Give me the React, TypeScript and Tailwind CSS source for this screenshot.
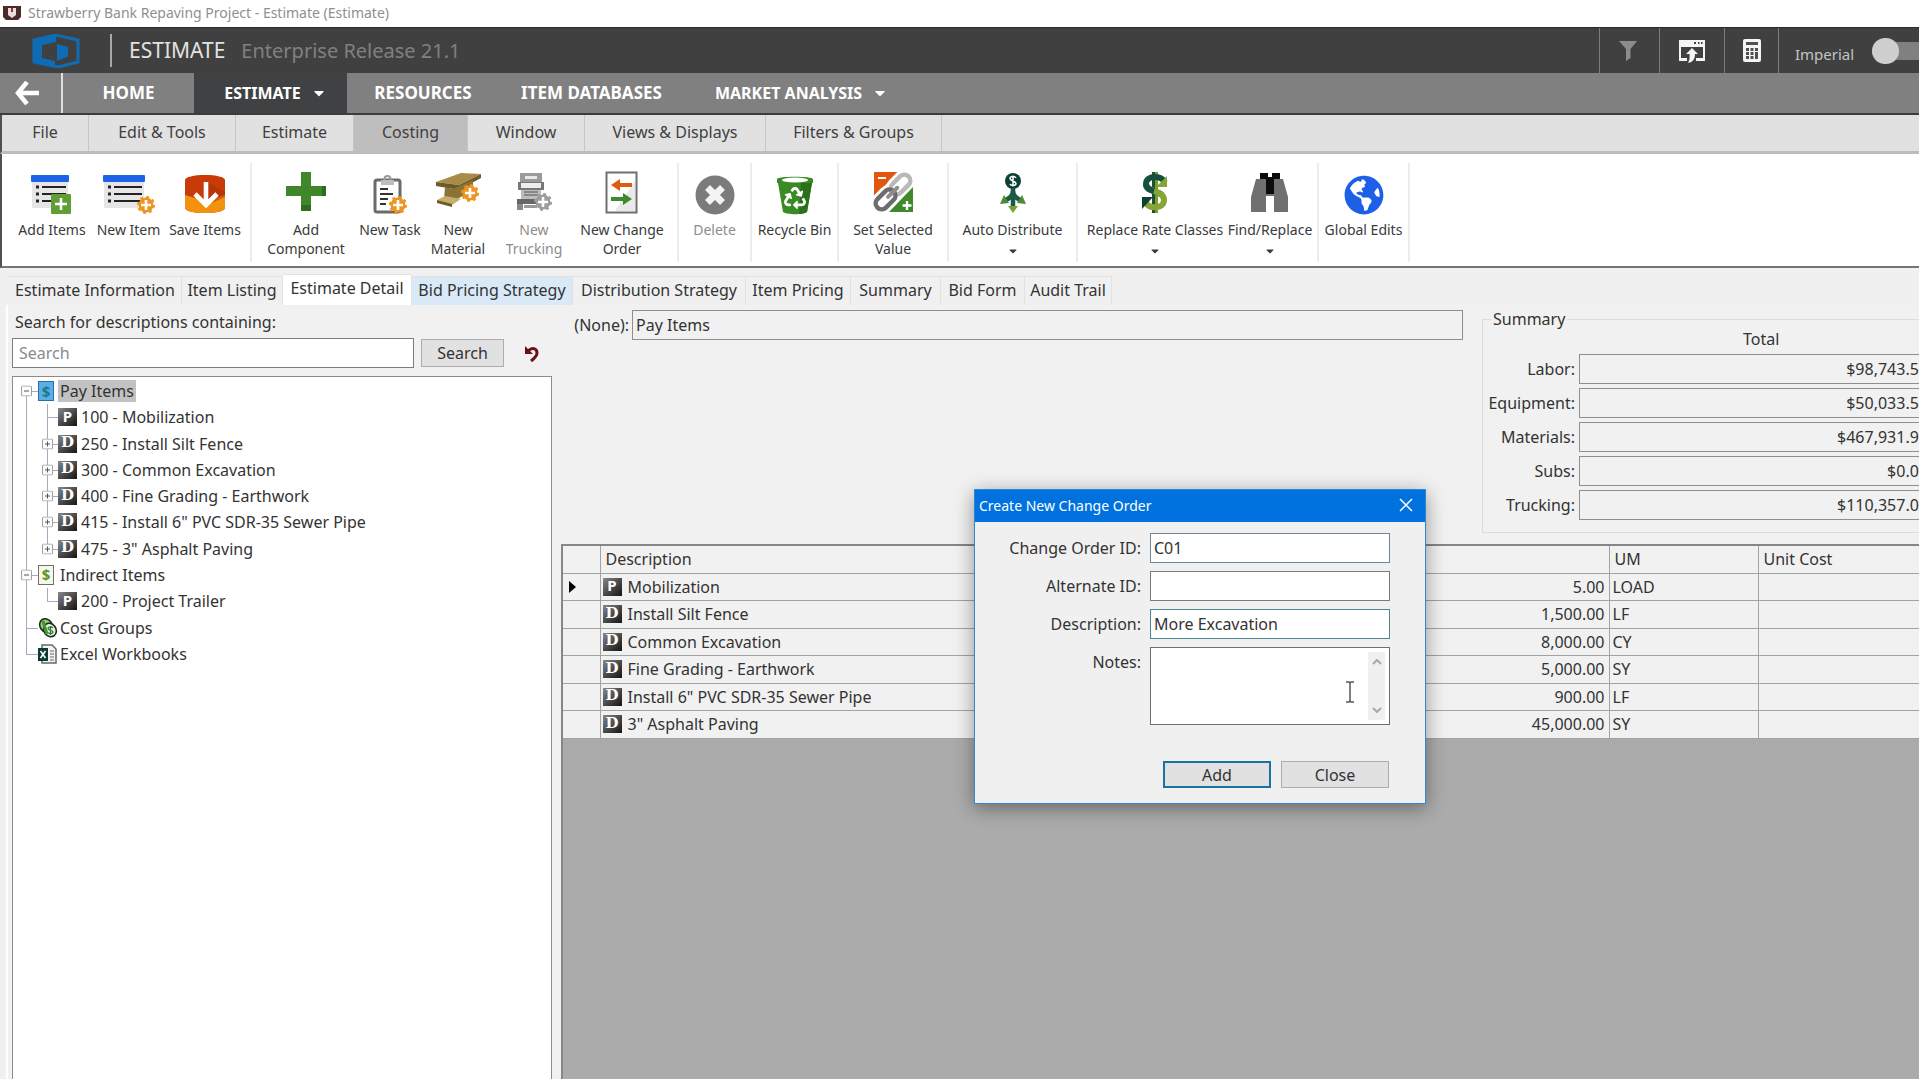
import * as React from "react";
import clsx from "clsx";
import { FaCaretDown, FaGlobeAmericas, FaRecycle } from "react-icons/fa";

/* ---------- icons ---------- */

const SunBadge = ({ x, y, fill = "#ee9420" }: { x: number; y: number; fill?: string }) => (
  <g transform={`translate(${x} ${y})`}>
    <circle r="7.500" fill={fill} />
    <circle r="8" fill="none" stroke={fill} strokeWidth="2" strokeDasharray="3 3.28" />
    <path d="M0-5V5M-5 0H5" stroke="#fff" strokeWidth="2.6" />
  </g>
);

const ListRows = () => (
  <>
    <rect x="1" y="5" width="36" height="32" fill="#e6e6e6" />
    <rect x="0" y="4" width="38" height="7" rx="1" fill="#1f62ea" />
    <path d="M5 16h3M5 23h3M5 30h3" stroke="#222" strokeWidth="3" />
    <path d="M11 16h24M11 23h24M11 30h24" stroke="#222" strokeWidth="2" />
  </>
);

const AddItemsIcon = () => (
  <svg viewBox="0 0 42 44" className="h-11 w-[42px]">
    <ListRows />
    <rect x="20" y="23" width="20" height="20" rx="1" fill="#5f9f35" />
    <path d="M30 27v12M24 33h12" stroke="#fff" strokeWidth="2.6" />
  </svg>
);

const NewItemIcon = () => (
  <svg viewBox="0 0 52 44" className="h-11 w-[52px]">
    <rect x="1" y="5" width="40" height="32" fill="#e6e6e6" />
    <rect x="0" y="4" width="42" height="7" rx="1" fill="#1f62ea" />
    <path d="M5 16h3M5 23h3M5 30h3" stroke="#222" strokeWidth="3" />
    <path d="M11 16h28M11 23h28M11 30h26" stroke="#222" strokeWidth="2" />
    <SunBadge x={43} y={34} />
  </svg>
);

const SaveIcon = () => (
  <svg viewBox="0 0 40 44" className="h-11 w-10">
    <path d="M0 9c0-3 9-5 20-5s20 2 20 5v28c0 3-9 5-20 5S0 40 0 37z" fill="#c83a07" />
    <path d="M0 24l20 6 20-6v13c0 3-9 5-20 5S0 40 0 37z" fill="#f2920f" />
    <path d="M22 11l18 10v5l-18 8z" fill="#a82f05" opacity=".5" />
    <path d="M21 11v22M10 23l11 11 11-11" fill="none" stroke="#fff" strokeWidth="4.6" />
  </svg>
);

const PlusIcon = () => (
  <svg viewBox="0 0 40 44" className="h-11 w-10">
    <path d="M15 1h10v14h15v10H25v15H15V25H0V15h15z" fill="#40862b" />
    <path d="M15 34h10v6H15zM36 15h4v10h-4z" fill="#2f6c20" />
  </svg>
);

const TaskIcon = () => (
  <svg viewBox="0 0 36 44" className="h-11 w-9">
    <rect x="3" y="9" width="25" height="32" rx="2" fill="#fff" stroke="#6b6b6b" strokeWidth="3" />
    <circle cx="15.500" cy="8" r="3" fill="none" stroke="#9a9a9a" strokeWidth="2" />
    <rect x="9" y="9" width="13" height="5" fill="#bdbdbd" />
    <path d="M8 18h8M8 23h13M8 28h8M8 33h6" stroke="#333" strokeWidth="2" />
    <SunBadge x={26} y={34} />
  </svg>
);

const MaterialIcon = () => (
  <svg viewBox="0 0 50 44" className="h-11 w-[50px]">
    <path d="M3 11L28 2l20 1-22 11z" fill="#a78c48" />
    <path d="M3 11v4l23 4v-5zM26 14l22-11v4L26 19z" fill="#6e5a26" />
    <path d="M12 16l8 2v11l-9-1zM20 18l20-9v9L20 31z" fill="#8a7335" />
    <path d="M4 29l8-4 16 3-9 6z" fill="#c4b06a" />
    <path d="M4 29l15 4v3L4 32z" fill="#6e5a26" />
    <SunBadge x={37} y={22} />
  </svg>
);

const TruckIcon = () => (
  <svg viewBox="0 0 36 44" className="h-11 w-9">
    <path d="M4 2h22v9H4z" fill="#9a9a9a" />
    <path d="M9 5h12v3H9z" fill="#e8e8e8" />
    <path d="M2 11h26v8H2z" fill="#777" />
    <path d="M5 12h20v5H5z" fill="#eee" />
    <path d="M5 19h20v9H5z" fill="#bdbdbd" />
    <path d="M8 21h14M8 24h14" stroke="#777" strokeWidth="1.500" />
    <path d="M1 28h27v5H1z" fill="#666" />
    <path d="M1 33h6v6H1z" fill="#888" />
    <path d="M8 34h12v3H8z" fill="#999" />
    <SunBadge x={27} y={31} fill="#9c9c9c" />
  </svg>
);

const ChangeOrderIcon = () => (
  <svg viewBox="0 0 34 44" className="h-11 w-[34px]">
    <rect x="1.500" y="1.500" width="30" height="40" fill="#fff" stroke="#6f6f6f" strokeWidth="2" />
    <path d="M30 10v30H10z" fill="#e9e9e9" />
    <path d="M6 14l9-6v4h12v4H15v4z" fill="#e05a10" />
    <path d="M27 28l-9-6v4H6v4h12v4z" fill="#3c8a2a" />
  </svg>
);

const DeleteIcon = () => (
  <svg viewBox="0 0 40 44" className="h-11 w-10">
    <circle cx="20" cy="24" r="19.500" fill="#7b7b7b" />
    <path d="M12.500 16.500l15 15M27.500 16.500l-15 15" stroke="#f3f3f3" strokeWidth="7" />
  </svg>
);

const BinIcon = () => (
  <span className="relative flex h-11 w-9 justify-center">
    <svg viewBox="0 0 36 44" className="absolute inset-0 h-11 w-9">
      <path d="M0 8c0-3 36-3 36 0v4h-1l-5 29c-4 3-20 3-24 0L1 12H0z" fill="#3a8a26" />
      <path d="M24 12h11l-5 29c-2 1-5 2-8 2z" fill="#2a6f1a" />
      <ellipse cx="18" cy="9" rx="13" ry="2.500" fill="#fff" />
    </svg>
    <FaRecycle className="relative mt-4 h-[22px] w-[22px] text-white" />
  </span>
);

const LinkIcon = () => (
  <svg viewBox="0 0 40 44" className="h-11 w-10">
    <path d="M1 1h25L1 25z" fill="#e2570d" />
    <path d="M40 16v25H16z" fill="#3e8a2b" />
    <path d="M5 7h8" stroke="#fff" strokeWidth="2" />
    <path d="M34 30v9M29.500 34.500h9" stroke="#fff" strokeWidth="2.400" />
    <g fill="none" strokeLinecap="round" transform="rotate(-45 20 21)">
      <rect x="-3" y="14" width="24" height="13" rx="6.500" stroke="#fff" strokeWidth="8" />
      <rect x="19" y="14" width="24" height="13" rx="6.500" stroke="#fff" strokeWidth="8" />
      <rect x="19" y="15" width="23" height="12" rx="6" stroke="#b9b9b9" strokeWidth="4.500" />
      <rect x="-2" y="15" width="23" height="12" rx="6" stroke="#6d6d6d" strokeWidth="4.500" />
      <path d="M13 21h13" stroke="#8d8d8d" strokeWidth="4" />
    </g>
  </svg>
);

const DistributeIcon = () => (
  <svg viewBox="0 0 28 44" className="h-11 w-7">
    <circle cx="14" cy="10" r="8" fill="#0d4034" />
    <path d="M17 7c-1-2-6-2-6 .5S17 10 17 12.500s-5 2.500-6 .5M14 4.500v11" fill="none" stroke="#fff" strokeWidth="1.500" />
    <path d="M14 17v20M14 19c0 6-3 8-9 11M14 19c0 6 3 8 9 11" fill="none" stroke="#1c5a41" strokeWidth="4.500" />
    <path d="M5 24l5 8-9 1zM23 24l-5 8 9 1z" fill="#4f8a36" />
    <path d="M9 35h10l-5 7z" fill="#76a13b" />
  </svg>
);

const DollarCycleIcon = () => (
  <svg viewBox="0 0 28 44" className="h-11 w-7">
    <path d="M11 1h5v41h-5z" fill="#1c5038" />
    <path d="M14 1h3v41h-3z" fill="#7d9c2c" />
    <path d="M24 11C20 4 5 4 5 13c0 8 11 6 16 11" fill="none" stroke="#155040" strokeWidth="6" />
    <path d="M5 13c0 8 18 6 18 16 0 9-14 9-18 3" fill="none" stroke="#86a533" strokeWidth="6" />
    <path d="M5 13c0 4 4 6 8 7" fill="none" stroke="#155040" strokeWidth="6" />
    <path d="M26 5v11H15z" fill="#86a533" />
    <path d="M1 38V26h11z" fill="#0f3f34" />
  </svg>
);

const BinocularsIcon = () => (
  <svg viewBox="0 0 38 44" className="h-11 w-[38px]">
    <path d="M5 8h27l5 18v15H23V25h-8v16H0V26z" fill="#707070" />
    <path d="M9 2h8v6H9zM21 2h8v6h-8zM15 6h8v17h-8z" fill="#0c0c0c" />
    <path d="M17 2h4v4h-4z" fill="#fff" />
  </svg>
);

const GlobeIcon = () => (
  <span className="flex h-11 w-10 items-end justify-center">
    <FaGlobeAmericas className="h-10 w-10 text-[#1d5fe6]" />
  </span>
);

const Logo = () => (
  <svg viewBox="0 0 48 34" className="h-[34px] w-12">
    <path d="M24 1l22 5v22l-20 5L2 28V6z" fill="none" stroke="#0e6cb4" strokeWidth="3" />
    <path d="M2 6L24 1v7L10 11v13l13 3v6L2 28z" fill="#0e6cb4" />
    <path d="M13 12l10-3v17l-10-2z" fill="#404040" />
    <path d="M25 9l12 4v9l-12 5z" fill="#0e6cb4" />
    <path d="M25 9l12 3v12l-11 4" fill="none" stroke="#404040" strokeWidth="2" />
  </svg>
);

/* ---------- ribbon ---------- */

type Tool = { label: string; icon: React.ReactNode; w: string; disabled?: boolean; menu?: boolean };

const GROUPS: { cls: string; tools: Tool[] }[] = [
  {
    cls: "w-[250px] pl-3",
    tools: [
      { label: "Add Items", icon: <AddItemsIcon />, w: "w-[76px]" },
      { label: "New Item", icon: <NewItemIcon />, w: "w-[77px]" },
      { label: "Save Items", icon: <SaveIcon />, w: "w-[76px]" },
    ],
  },
  {
    cls: "w-[427px] pl-[11px]",
    tools: [
      { label: "Add Component", icon: <PlusIcon />, w: "w-[86px]" },
      { label: "New Task", icon: <TaskIcon />, w: "w-[82px]" },
      { label: "New Material", icon: <MaterialIcon />, w: "w-[54px]" },
      { label: "New Trucking", icon: <TruckIcon />, w: "w-[94px] pr-3 pl-4", disabled: true },
      { label: "New Change Order", icon: <ChangeOrderIcon />, w: "w-[86px]" },
    ],
  },
  { cls: "w-[73px]", tools: [{ label: "Delete", icon: <DeleteIcon />, w: "w-full", disabled: true }] },
  { cls: "w-[87px]", tools: [{ label: "Recycle Bin", icon: <BinIcon />, w: "w-full" }] },
  { cls: "w-[110px]", tools: [{ label: "Set Selected Value", icon: <LinkIcon />, w: "w-full px-3" }] },
  { cls: "w-[129px]", tools: [{ label: "Auto Distribute", icon: <DistributeIcon />, w: "w-full", menu: true }] },
  {
    cls: "w-[241px] pl-1",
    tools: [
      { label: "Replace Rate Classes", icon: <DollarCycleIcon />, w: "w-[146px]", menu: true },
      { label: "Find/Replace", icon: <BinocularsIcon />, w: "w-[84px]", menu: true },
    ],
  },
  { cls: "w-[91px]", tools: [{ label: "Global Edits", icon: <GlobeIcon />, w: "w-full" }] },
];

function ToolButton({ tool }: { tool: Tool }) {
  return (
    <button
      type="button"
      disabled={tool.disabled}
      className={clsx(
        "flex shrink-0 flex-col items-center pt-2 text-[14px] leading-[19px]",
        tool.w,
        tool.disabled ? "text-[#8c8c8c]" : "text-[#3a3a3a]"
      )}
    >
      {tool.icon}
      <span className="mt-[5px]">{tool.label}</span>
      {tool.menu ? <FaCaretDown className="mt-[6px] h-3 w-2" /> : null}
    </button>
  );
}

const MENUS: [string, string][] = [
  ["File", "w-[87px]"],
  ["Edit & Tools", "w-[147px]"],
  ["Estimate", "w-[118px]"],
  ["Costing", "w-[114px]"],
  ["Window", "w-[117px]"],
  ["Views & Displays", "w-[181px]"],
  ["Filters & Groups", "w-[176px]"],
];

const TABS: [string, string][] = [
  ["Estimate Information", "w-[173px]"],
  ["Item Listing", "w-[101px]"],
  ["Estimate Detail", "w-[129px]"],
  ["Bid Pricing Strategy", "w-[161px]"],
  ["Distribution Strategy", "w-[173px]"],
  ["Item Pricing", "w-[105px]"],
  ["Summary", "w-[90px]"],
  ["Bid Form", "w-[84px]"],
  ["Audit Trail", "w-[87px]"],
];

function Header() {
  return (
    <header className="shrink-0">
      <div className="flex h-[27px] items-center gap-[7px] bg-white pb-[2px] pl-[3px] text-[14px] text-[#8f8f8f]">
        <svg viewBox="0 0 18 14" className="h-[14px] w-[18px]">
          <path d="M0 0h18v11l-3 3H3l-3-3z" fill="#4a2a2a" />
          <path d="M5 2h8v7l-4 3-4-3z" fill="#e8dede" />
          <path d="M8 2h2v4H8z" fill="#a03030" />
        </svg>
        <span>Strawberry Bank Repaving Project - Estimate (Estimate)</span>
      </div>

      <div className="flex h-[46px] items-stretch border-t border-[#2c2c2c] bg-[#404040]">
        <div className="flex w-[110px] items-center pl-8">
          <Logo />
        </div>
        <div className="my-[6px] border-l-2 border-[#a8a8a8]" />
        <div className="flex items-center gap-4 pl-[17px] text-[20px]">
          <h1 className="text-[21px] text-[#e2e2e2]">ESTIMATE</h1>
          <span className="text-[#808080]">Enterprise Release 21.1</span>
        </div>
        <div className="ml-auto flex items-stretch">
          <button type="button" aria-label="Filter" className="flex w-[60px] items-center justify-center border-l border-[#7c7c7c] pr-1">
            <svg viewBox="0 0 18 20" className="h-5 w-[18px]">
              <path d="M0 0h18l-6.500 8v9L7 20V8z" fill="#8c8c8c" />
            </svg>
          </button>
          <button type="button" aria-label="Export window" className="flex w-[65px] items-center justify-center border-l border-[#7c7c7c]">
            <svg viewBox="0 0 26 24" className="h-6 w-[26px]">
              <path d="M0 1h26v21h-9v-3h7V8H2v11h6v3H0z" fill="#f4f4f4" />
              <path d="M15 3h2v2h-2zM19 3h1.500v2H19zM22 3h1.500v2H22z" fill="#404040" />
              <path d="M13 9l6 6h-3c0 5-2 8-7 9 1-2 2-4 1.500-9H7z" fill="#f4f4f4" />
            </svg>
          </button>
          <button type="button" aria-label="Calculator" className="flex w-[54px] items-center justify-center border-l border-[#7c7c7c]">
            <svg viewBox="0 0 18 23" className="h-[23px] w-[18px]">
              <rect width="18" height="23" rx="2" fill="#f4f4f4" />
              <path d="M3 3h12v3H3zM3 9h3v3H3zM7.500 9h3v3h-3zM12 9h3v3h-3zM3 13h3v3H3zM7.500 13h3v3h-3zM12 13h3v7h-3zM3 17h3v3H3zM7.500 17h3v3h-3z" fill="#505050" />
            </svg>
          </button>
          <label className="flex w-[141px] items-center overflow-hidden border-l border-[#7c7c7c] pl-4 text-[15px] text-[#c4c4c4]">
            <span className="w-[77px] shrink-0 pt-2">Imperial</span>
            <input type="checkbox" role="switch" className="peer sr-only" />
            <span className="flex h-[18px] w-16 shrink-0 items-center rounded-full bg-[#808080]">
              <span className="h-[26px] w-[27px] rounded-full bg-[#cfcfcf]" />
            </span>
          </label>
        </div>
      </div>

      <nav className="flex h-[42px] items-stretch border-b-2 border-[#3c3c3c] bg-[#808080] text-[17px] font-bold text-white">
        <button type="button" aria-label="Back" className="flex w-[63px] items-center justify-center border-r-2 border-[#e0e0e0] pr-2">
          <svg viewBox="0 0 24 24" className="h-6 w-6" fill="none" stroke="#fff" strokeWidth="4.500">
            <path d="M12 1L3 12l9 11M3 12h21" />
          </svg>
        </button>
        <a href="#home" className="flex w-[131px] items-center justify-center">HOME</a>
        <a href="#estimate" className="flex w-[153px] items-center justify-center gap-3 bg-[#404142] pl-2 text-[16px]">
          ESTIMATE <FaCaretDown className="h-4 w-3" />
        </a>
        <a href="#resources" className="flex w-[152px] items-center justify-center">RESOURCES</a>
        <a href="#items" className="flex w-[185px] items-center justify-center">ITEM DATABASES</a>
        <a href="#market" className="flex w-[233px] items-center justify-center gap-3 text-[16px]">
          MARKET ANALYSIS <FaCaretDown className="h-4 w-3" />
        </a>
      </nav>

      <div className="flex h-[39px] border-b-[3px] border-l-2 border-b-[#bcbcbc] border-l-[#505050] bg-[#e1e1e1] text-[16px] text-[#404040]">
        {MENUS.map(([label, w]) => (
          <button
            key={label}
            type="button"
            className={clsx("border-r border-[#c6c6c6] pb-[2px]", w, label === "Costing" && "bg-[#bebebe]")}
          >
            {label}
          </button>
        ))}
      </div>

      <div className="flex h-[114px] border-b-2 border-l-2 border-b-[#757575] border-l-[#505050] bg-white pt-[9px] pb-1">
        {GROUPS.map((g) => (
          <div key={g.tools[0].label} className={clsx("flex shrink-0 items-start border-r-2 border-[#ececec]", g.cls)}>
            {g.tools.map((t) => (
              <ToolButton key={t.label} tool={t} />
            ))}
          </div>
        ))}
      </div>
    </header>
  );
}

/* ---------- tree ---------- */

type Node = { label: string; icon: "pay" | "indirect" | "cost" | "excel" | "P" | "D"; box?: "+" | "-"; child?: boolean; last?: boolean };

const TREE: Node[] = [
  { label: "Pay Items", icon: "pay", box: "-" },
  { label: "100 - Mobilization", icon: "P", child: true },
  { label: "250 - Install Silt Fence", icon: "D", child: true, box: "+" },
  { label: "300 - Common Excavation", icon: "D", child: true, box: "+" },
  { label: "400 - Fine Grading - Earthwork", icon: "D", child: true, box: "+" },
  { label: '415 - Install 6" PVC SDR-35 Sewer Pipe', icon: "D", child: true, box: "+" },
  { label: '475 - 3" Asphalt Paving', icon: "D", child: true, box: "+", last: true },
  { label: "Indirect Items", icon: "indirect", box: "-" },
  { label: "200 - Project Trailer", icon: "P", child: true, last: true },
  { label: "Cost Groups", icon: "cost" },
  { label: "Excel Workbooks", icon: "excel", last: true },
];

const KindBadge = ({ kind }: { kind: string }) => (
  <span
    className={clsx(
      "flex h-[18px] w-[19px] shrink-0 items-center justify-center bg-linear-to-br from-[#8a8a8a] via-[#4c4c4c] to-[#161616] pb-[2px] text-[15px] leading-none font-bold text-white",
      kind === "D" && "font-['DejaVu_Serif',serif]"
    )}
  >
    {kind}
  </span>
);

function Branch({ node, pass }: { node: Node; pass?: boolean }) {
  const inner = node.child && !pass;
  return (
    <span className={clsx("relative shrink-0 self-stretch", inner ? "w-5" : "w-[25px]")}>
      <span
        className={clsx(
          "absolute w-px bg-[#a9a9bd]",
          inner ? "left-[9px]" : "left-[13px]",
          node.label === "Pay Items" ? "top-1/2" : "top-0",
          node.last && !pass ? "bottom-1/2" : "bottom-0"
        )}
      />
      {pass ? null : (
        <span className={clsx("absolute top-1/2 right-0 h-px bg-[#a9a9bd]", inner ? "left-[9px]" : "left-[13px]")} />
      )}
      {node.box && !pass ? (
        <svg
          viewBox="0 0 11 11"
          className={clsx("absolute top-1/2 h-[11px] w-[11px] -translate-y-1/2", inner ? "left-1" : "left-2")}
        >
          <rect x=".5" y=".5" width="10" height="10" rx="1" fill="#fbfbfb" stroke="#a0a0a0" />
          <path d={node.box === "+" ? "M3 5.500h5M5.500 3v5" : "M3 5.500h5"} stroke="#555" />
        </svg>
      ) : null}
    </span>
  );
}

function NodeIcon({ icon }: { icon: Node["icon"] }) {
  if (icon === "P" || icon === "D") return <KindBadge kind={icon} />;
  if (icon === "pay" || icon === "indirect")
    return (
      <span
        className={clsx(
          "mr-1 flex h-5 w-4 shrink-0 items-center justify-center border text-[15px] leading-none font-bold",
          icon === "pay" ? "border-[#2d6fa3] bg-[#5aaeea] text-[#1c7c86]" : "border-[#6f6f6f] bg-[#f6f6ee] text-[#5b9427]"
        )}
      >
        $
      </span>
    );
  if (icon === "cost")
    return (
      <svg viewBox="0 0 20 20" className="h-5 w-5 shrink-0">
        <ellipse cx="8" cy="7.500" rx="6" ry="7" transform="rotate(-35 8 7.500)" fill="#9ccb7c" stroke="#1d2b1d" strokeWidth="1.600" />
        <ellipse cx="12" cy="12" rx="6" ry="7" transform="rotate(-35 12 12)" fill="#e6f2dd" stroke="#1d2b1d" strokeWidth="1.600" />
        <path d="M5 3l4 13" stroke="#3f9a2d" strokeWidth="3" />
        <path d="M15 10c-1-1.500-5-1.500-5 .5s5 1.500 5 3.500-4 2-5 .5M12.500 8v9" fill="none" stroke="#2b7a2b" strokeWidth="1.300" />
      </svg>
    );
  return (
    <svg viewBox="0 0 20 20" className="h-5 w-5 shrink-0">
      <path d="M4 1h10l4 4v14H4z" fill="#f4f4f4" stroke="#5d6b66" strokeWidth="1.500" />
      <path d="M12 7h4M12 10h4M12 13h4M12 16h4" stroke="#5d6b66" strokeWidth="1.200" />
      <path d="M0 4h10v13H0z" fill="#0e3a34" />
      <path d="M2.500 7l5 7M7.500 7l-5 7" stroke="#fff" strokeWidth="1.600" />
    </svg>
  );
}

function TreePanel() {
  return (
    <aside className="flex w-[544px] shrink-0 flex-col pl-1">
      <label htmlFor="tree-search" className="pt-[5px] pl-[3px] leading-6">
        Search for descriptions containing:
      </label>
      <div className="mt-1 flex items-center">
        <input
          id="tree-search"
          type="search"
          placeholder="Search"
          className="h-[30px] w-[402px] border border-[#7d7d7d] bg-white px-[6px] placeholder:text-[#8a8a8a]"
        />
        <button type="button" className="ml-[7px] h-7 w-[83px] border border-[#adadad] bg-[#e1e1e1] leading-none">
          Search
        </button>
        <button type="button" aria-label="Undo" className="ml-5">
          <svg viewBox="0 0 16 17" className="h-[17px] w-4">
            <path d="M4 6c4-4 9-3 9 2 0 3-2 5-6 8" fill="none" stroke="#6b1018" strokeWidth="3" />
            <path d="M1 1v8h8z" fill="#6b1018" />
          </svg>
        </button>
      </div>
      <div className="mt-2 grow border border-b-0 border-[#8c8c8c] bg-white pt-px">
        <ul className="flex h-[289px] flex-col">
          {TREE.map((n) => (
            <li key={n.label} className="flex flex-1 items-center">
              <Branch node={n} pass={n.child} />
              {n.child ? <Branch node={n} /> : null}
              <NodeIcon icon={n.icon} />
              <span className={clsx("px-[2px] leading-[22px]", n.child && "ml-[2px]", n.label === "Pay Items" && "bg-[#c2c2c2]")}>
                {n.label}
              </span>
            </li>
          ))}
        </ul>
      </div>
    </aside>
  );
}

/* ---------- detail ---------- */

const TOTALS: [string, string][] = [
  ["Labor:", "$98,743.50"],
  ["Equipment:", "$50,033.50"],
  ["Materials:", "$467,931.90"],
  ["Subs:", "$0.00"],
  ["Trucking:", "$110,357.00"],
];

const ROWS: [string, string, string, string][] = [
  ["P", "Mobilization", "5.00", "LOAD"],
  ["D", "Install Silt Fence", "1,500.00", "LF"],
  ["D", "Common Excavation", "8,000.00", "CY"],
  ["D", "Fine Grading - Earthwork", "5,000.00", "SY"],
  ["D", 'Install 6" PVC SDR-35 Sewer Pipe', "900.00", "LF"],
  ["D", '3" Asphalt Paving', "45,000.00", "SY"],
];

function DetailPanel() {
  return (
    <section className="flex min-w-0 grow flex-col pl-[9px]">
      <div className="flex h-[239px] items-start">
        <label htmlFor="parent" className="w-[68px] shrink-0 pt-[5px] text-right leading-[30px]">
          (None):
        </label>
        <input id="parent" readOnly value="Pay Items" className="mt-[5px] ml-[3px] h-[30px] min-w-0 grow border border-[#8e8e8e] px-[3px]" />
        <fieldset className="mt-[2px] ml-[19px] h-[226px] w-[437px] min-w-0 shrink-0 overflow-hidden border border-r-0 border-[#dcdcdc]">
          <legend className="ml-2 px-[2px] leading-6">Summary</legend>
          <div className="-mt-[3px] pl-[260px] leading-[22px]">Total</div>
          <div className="mt-1 flex w-[460px] flex-col gap-1">
            {TOTALS.map(([label, value]) => (
              <div key={label} className="flex h-[30px] items-center">
                <label htmlFor={label} className="w-[92px] shrink-0 text-right">{label}</label>
                <input id={label} readOnly value={value} className="ml-1 h-[30px] w-[353px] border border-[#8e8e8e] pr-[3px] text-right" />
              </div>
            ))}
          </div>
        </fieldset>
      </div>

      <div className="grow border-t-2 border-l-2 border-[#868686] bg-[#ababab]">
        <table className="w-full table-fixed border-collapse bg-[#f1f1f1] text-left">
          <thead>
            <tr className="h-[27px] border-b border-[#a3a3a3]">
              <th className="w-[37px] border-r border-[#a3a3a3]" />
              <th className="w-[600px] border-r border-[#a3a3a3] pl-[5px] font-normal">Description</th>
              <th aria-label="Quantity" className="border-r border-[#a3a3a3]" />
              <th className="w-[149px] border-r border-[#a3a3a3] pl-[5px] font-normal">UM</th>
              <th className="w-[161px] pl-[5px] font-normal">Unit Cost</th>
            </tr>
          </thead>
          <tbody>
            {ROWS.map(([kind, name, qty, um], i) => (
              <tr key={name} className="border-b border-[#a3a3a3] leading-[26px] odd:h-[27px] even:h-[28px]">
                <td className="border-r border-[#a3a3a3] pl-[6px]">
                  {i === 0 ? (
                    <svg viewBox="0 0 7 12" className="h-3 w-[7px]">
                      <path d="M0 0l7 6-7 6z" fill="#000" />
                    </svg>
                  ) : null}
                </td>
                <td className="border-r border-[#a3a3a3] pl-[2px]">
                  <span className="flex items-center gap-[6px]">
                    <KindBadge kind={kind} />
                    {name}
                  </span>
                </td>
                <td className="border-r border-[#a3a3a3] pr-1 text-right">{qty}</td>
                <td className="border-r border-[#a3a3a3] pl-[3px]">{um}</td>
                <td />
              </tr>
            ))}
          </tbody>
        </table>
      </div>
    </section>
  );
}

/* ---------- dialog ---------- */

function ChangeOrderDialog() {
  const [id, setId] = React.useState("C01");
  const [alt, setAlt] = React.useState("");
  const [desc, setDesc] = React.useState("More Excavation");

  return (
    <form
      role="dialog"
      aria-labelledby="co-title"
      onSubmit={(e) => e.preventDefault()}
      className="absolute top-[489px] left-[974px] w-[452px] border border-[#2f86d6] bg-[#f0f0f0] shadow-[0_4px_18px_rgba(0,0,0,0.4)]"
    >
      <div className="flex h-8 items-center justify-between bg-[#0072e0] pr-3 pb-[2px] pl-1 text-[14px] text-white">
        <h2 id="co-title">Create New Change Order</h2>
        <button type="button" aria-label="Close dialog">
          <svg viewBox="0 0 14 14" className="h-[14px] w-[14px]" stroke="#fff" strokeWidth="1.500">
            <path d="M1 1l12 12M13 1L1 13" />
          </svg>
        </button>
      </div>
      <div className="grid grid-cols-[166px_240px] gap-x-[9px] gap-y-2 pt-[11px] text-right">
        <label htmlFor="co-id" className="leading-[30px]">Change Order ID:</label>
        <input id="co-id" value={id} onChange={(e) => setId(e.target.value)} className="h-[30px] border border-[#6d8796] bg-white px-[3px]" />
        <label htmlFor="co-alt" className="leading-[30px]">Alternate ID:</label>
        <input id="co-alt" value={alt} onChange={(e) => setAlt(e.target.value)} className="h-[30px] border border-[#7a7a7a] bg-white px-[3px]" />
        <label htmlFor="co-desc" className="leading-[30px]">Description:</label>
        <input id="co-desc" value={desc} onChange={(e) => setDesc(e.target.value)} className="h-[30px] border border-[#4d8791] bg-white px-[3px]" />
        <label htmlFor="co-notes" className="leading-[30px]">Notes:</label>
        <div className="flex h-[78px] border border-[#6f6f6f] bg-white">
          <textarea id="co-notes" className="min-w-0 grow resize-none bg-white" />
          <div className="my-1 mr-1 flex w-[17px] flex-col items-center justify-between bg-[#f0f0f0] py-[7px]">
            <svg viewBox="0 0 10 6" className="h-[6px] w-[10px]" fill="none" stroke="#a8a8a8" strokeWidth="2">
              <path d="M1 5l4-4 4 4" />
            </svg>
            <svg viewBox="0 0 10 6" className="h-[6px] w-[10px]" fill="none" stroke="#a8a8a8" strokeWidth="2">
              <path d="M1 1l4 4 4-4" />
            </svg>
          </div>
        </div>
      </div>
      <div className="mt-9 mb-[15px] flex justify-end gap-[10px] pr-9">
        <button type="submit" className="h-[27px] w-[108px] border-2 border-[#1a72a0] bg-[#e1e1e1] leading-none">Add</button>
        <button type="button" className="h-[27px] w-[108px] border border-[#adadad] bg-[#e1e1e1] leading-none">Close</button>
      </div>
      {/* text cursor resting over the notes box */}
      <svg viewBox="0 0 10 22" className="absolute top-[191px] left-[370px] h-[22px] w-[10px]" fill="none" stroke="#555" strokeWidth="1.500">
        <path d="M1 1h3l1 1 1-1h3M1 21h3l1-1 1 1h3M5 2v18" />
      </svg>
    </form>
  );
}

export default function App() {
  return (
    <div className="relative flex h-screen flex-col overflow-hidden bg-[#f0f0f0] font-['Noto_Sans',sans-serif] text-[16px] text-[#333]">
      <Header />
      <div role="tablist" className="flex h-[37px] shrink-0 items-end pl-[9px]">
        {TABS.map(([label, w]) => (
          <button
            key={label}
            type="button"
            role="tab"
            aria-selected={label === "Estimate Detail"}
            className={clsx(
              "border-t border-r border-[#e2e2e2]",
              w,
              label === "Estimate Detail" ? "h-[31px] bg-white pb-1" : "h-[29px] pb-[2px]",
              label.startsWith("Bid Pricing") && "bg-[#d9e9f7]"
            )}
          >
            {label}
          </button>
        ))}
      </div>
      <main className="ml-[6px] flex min-h-0 grow border-l-2 border-white bg-[#f1f1f1]">
        <TreePanel />
        <DetailPanel />
      </main>
      <ChangeOrderDialog />
    </div>
  );
}
